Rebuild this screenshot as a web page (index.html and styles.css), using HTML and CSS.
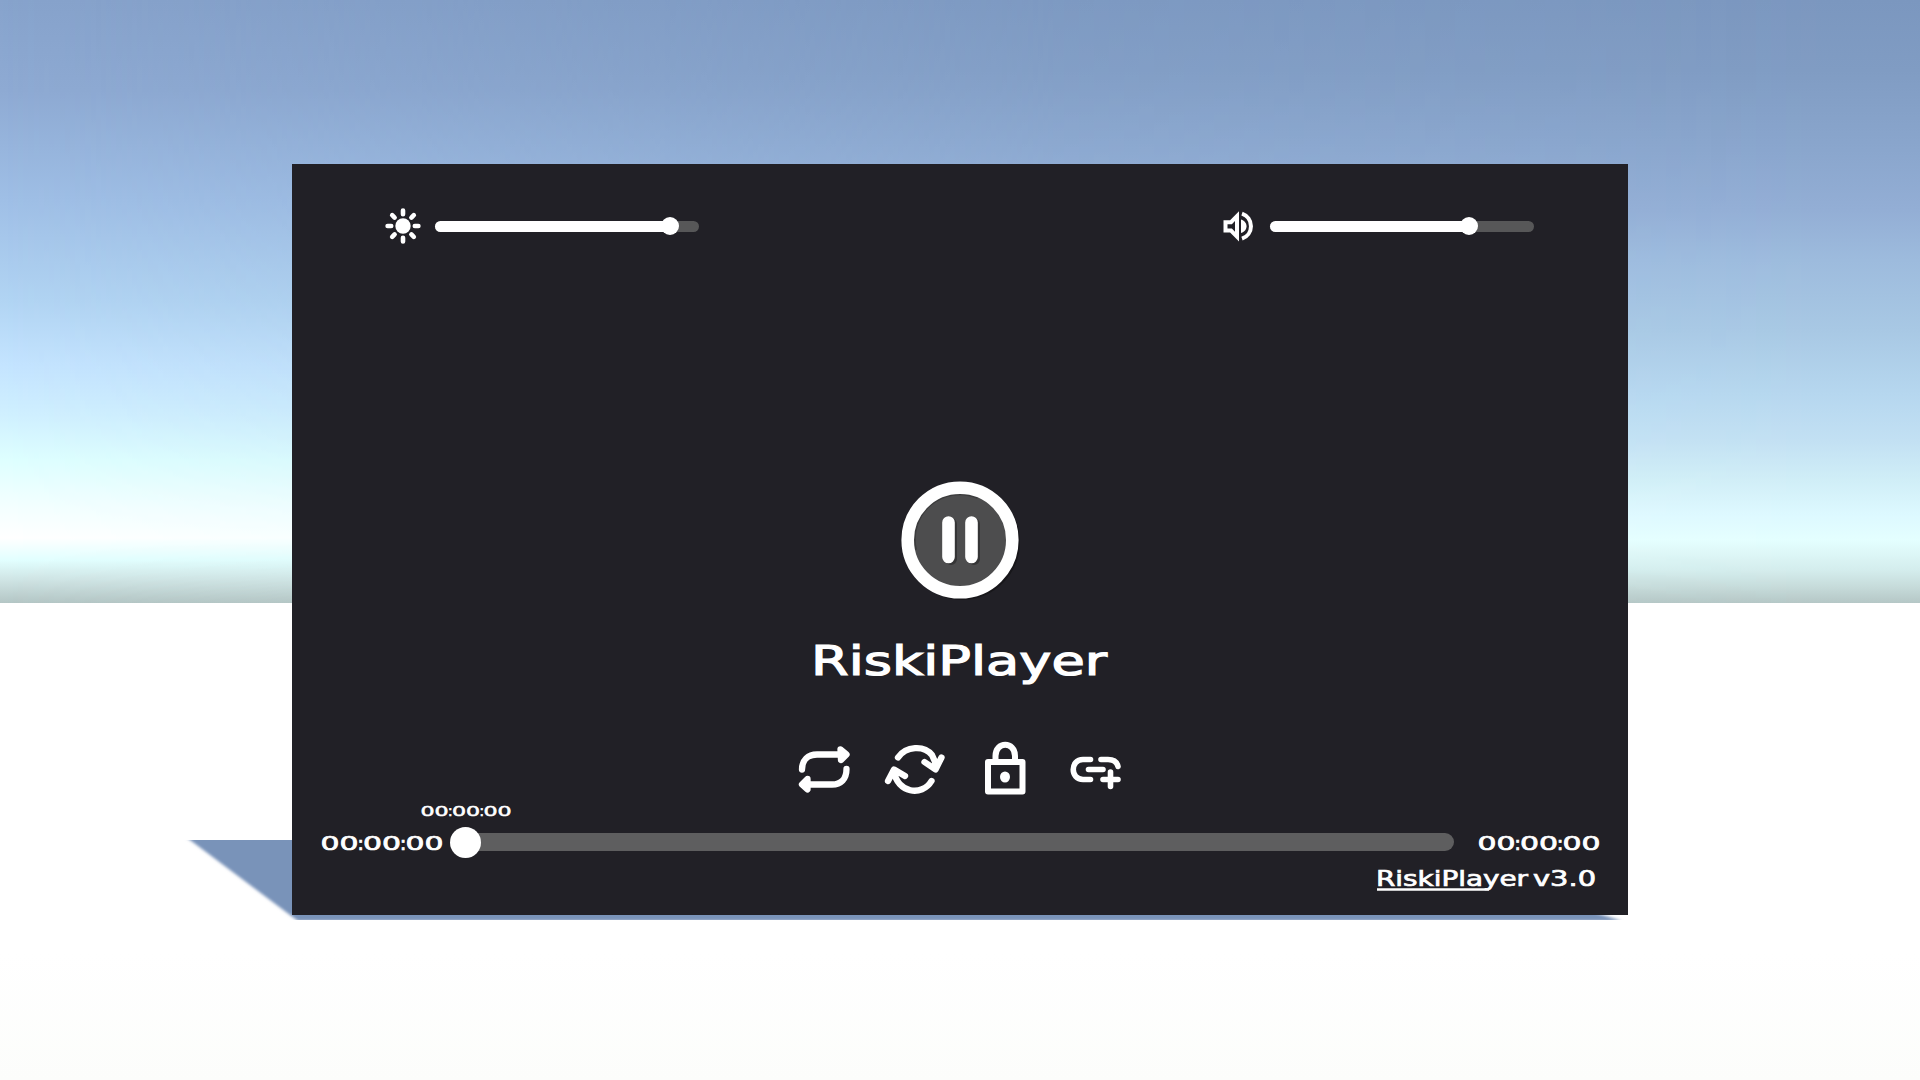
FILE: index.html
```html
<!DOCTYPE html>
<html lang="en">
<head>
<meta charset="utf-8">
<title>RiskiPlayer</title>
<link rel="stylesheet" href="styles.css">
</head>
<body>
<main class="scene">
  <div class="sky-east"></div>
  <svg class="shadow" viewBox="0 0 1480 100" aria-hidden="true">
    <defs><filter id="soft" x="-5%" y="-20%" width="110%" height="140%"><feGaussianBlur stdDeviation="1.6"/></filter>
    <clipPath id="floor"><path d="M0 10H1480V90H0z"/></clipPath></defs>
    <g clip-path="url(#floor)"><path filter="url(#soft)" d="M2 4L118 91H1442L1400 78L1380 4z"/></g>
  </svg>
  <section class="player">
    <div class="top">
      <div class="control">
        <svg class="icon-sm" viewBox="0 0 36 36"><circle cx="18" cy="18" r="7.7" fill="#fff"/><g stroke="#fff" stroke-width="4.6" stroke-linecap="round"><path d="M18 2.6v3.6M18 29.8v3.6M2.6 18h3.6M29.8 18h3.6M7.2 7.2l2.4 2.4M26.4 26.4l2.4 2.4M7.2 28.8l2.4-2.4M26.4 9.6l2.4-2.4"/></g></svg>
        <div class="slider"><div class="fill" style="width:235px"></div><div class="knob"></div></div>
      </div>
      <div class="control">
        <svg class="icon-sm" viewBox="0 0 36 36"><path d="M5.500 14.200h5.500l6-6v20.400l-6-6H5.500z" fill="none" stroke="#fff" stroke-width="4"/><path d="M21 11.500c4 1.500 5.500 4 5.500 6.800s-1.500 5.500-5.500 6.800z" fill="#fff"/><path d="M22 5.700a13.200 13.200 0 0 1 0 25" fill="none" stroke="#fff" stroke-width="4"/></svg>
        <div class="slider"><div class="fill" style="width:199px"></div><div class="knob"></div></div>
      </div>
    </div>
    <svg class="pause" viewBox="0 0 124 124"><circle cx="64" cy="64" r="58" fill="#17161a"/><circle cx="62" cy="62" r="52" fill="#4d4d4e"/><path d="M17 72A46 46 0 0 1 80 19" fill="none" stroke="#3b3b3c" stroke-width="4"/><circle cx="62" cy="62" r="52.300" fill="none" stroke="#fff" stroke-width="12.600"/><path d="M53 46v35M76 46v35" stroke="#353536" stroke-width="12" stroke-linecap="round"/><path d="M50.500 44.500v34.500M73.500 44.500v34.500" stroke="#fff" stroke-width="12.600" stroke-linecap="round"/></svg>
    <svg class="title" viewBox="0 0 300 56"><text x="1" y="37" textLength="296" lengthAdjust="spacingAndGlyphs">RiskiPlayer</text></svg>
    <svg class="actions" viewBox="0 0 360 90" fill="none" stroke="#fff" stroke-width="6.300" stroke-linecap="round" stroke-linejoin="round">
      <path d="M22 49.500C22 40 28 34.500 37 34.500H65M60.500 29.500L66.500 34.500L61 40ZM66.500 49C66.500 59 61 64.500 52 64.500H23M27.500 59L22 64.500L27.500 69.500Z"/>
      <path d="M118 37.500C126 26 144 25 152 35L156 44M144.500 42L155.500 49.500L161.500 37.500M108 61L114 49.500L125 56M114 51C117 73 142 77 151.500 61"/>
      <rect x="208" y="42" width="34.500" height="29.500" stroke-width="6"/><path d="M215.500 41V36C215.500 21 235 21 235 36V41" stroke-width="6"/><ellipse cx="225" cy="57" rx="5" ry="5.500" fill="#fff" stroke="none"/>
      <path stroke-width="5.600" d="M310.500 39.500H303C290 39.500 290 59.500 303 59.500H310.500M321 39.500H328C334 39.500 337 42 338 46.500M308.500 49.500H323M330.500 52V66.500M323 59.500H338"/>
    </svg>
    <div class="bottom">
      <svg class="tip" viewBox="0 0 124 27"><text y="21"><tspan x=".5" textLength="38" lengthAdjust="spacingAndGlyphs">00</tspan><tspan x="37.300">:</tspan><tspan x="43" textLength="38" lengthAdjust="spacingAndGlyphs">00</tspan><tspan x="79.800">:</tspan><tspan x="85.500" textLength="38" lengthAdjust="spacingAndGlyphs">00</tspan></text></svg>
      <div class="timeline">
        <svg class="time" viewBox="0 0 124 26"><text y="20.500"><tspan x=".5" textLength="38" lengthAdjust="spacingAndGlyphs">00</tspan><tspan x="37.300">:</tspan><tspan x="43" textLength="38" lengthAdjust="spacingAndGlyphs">00</tspan><tspan x="79.800">:</tspan><tspan x="85.500" textLength="38" lengthAdjust="spacingAndGlyphs">00</tspan></text></svg>
        <div class="track"><div class="handle"></div></div>
        <svg class="time" viewBox="0 0 124 26"><text y="20.500"><tspan x=".5" textLength="38" lengthAdjust="spacingAndGlyphs">00</tspan><tspan x="37.300">:</tspan><tspan x="43" textLength="38" lengthAdjust="spacingAndGlyphs">00</tspan><tspan x="79.800">:</tspan><tspan x="85.500" textLength="38" lengthAdjust="spacingAndGlyphs">00</tspan></text></svg>
      </div>
      <svg class="version" viewBox="0 0 222 30"><text x="0" y="20" textLength="152" lengthAdjust="spacingAndGlyphs">RiskiPlayer</text><text x="157" y="20" textLength="63" lengthAdjust="spacingAndGlyphs">v3.0</text><path d="M1 23.500H113" stroke="#fff" stroke-width="2.700"/></svg>
    </div>
  </section>
</main>
</body>
</html>
```
FILE: styles.css
```css
body { margin: 0; overflow: hidden; }
.scene {
  position: relative; box-sizing: border-box; width: 1920px; height: 1080px; padding: 164px 292px 165px;
  background:
    linear-gradient(#fff 0, #fff 350px, #fcfdfb 477px) 0 603px / 100% 477px no-repeat,
    linear-gradient(#87a3cc 0, #8eaad3 90px, #9fbfe6 200px, #b1d4f3 300px, #c4e4ff 365px, #d0f0ff 415px, #deffff 460px, #f3ffff 505px, #fff 538px, #e2ffff 560px, #cfe4e4 580px, #b4c6c5 603px);
}
.sky-east {
  position: absolute; inset: 0 0 auto; height: 603px;
  background: linear-gradient(#7b97bf 0, #809cc3 70px, #8aa6cd 150px, #93aed5 210px, #9dbbdd 260px, #a8c8e4 330px, #b6d7ef 395px, #c2e0f3 440px, #d0eef7 480px, #ddf9ff 515px, #e4ffff 540px, #d4eded 570px, #c6dbda 587px, #b5c7c6 603px);
  -webkit-mask-image: linear-gradient(to right, transparent, #000c 55%, #000 95%);
  mask-image: linear-gradient(to right, transparent, #000c 55%, #000 95%);
}
.shadow { position: absolute; left: 180px; top: 830px; width: 1480px; height: 100px; fill: #7993b9; }
.player { position: relative; box-sizing: border-box; width: 1336px; height: 751px; background: #212026; display: flex; flex-direction: column; align-items: center; }
.top { align-self: stretch; display: flex; justify-content: space-between; padding: 44px 94px 0 93px; height: 36px; }
.control { display: flex; align-items: center; gap: 14px; }
.icon-sm { width: 36px; height: 36px; }
.slider { width: 264px; height: 11px; border-radius: 6px; background: #575758; display: flex; align-items: center; }
.fill { height: 11px; border-radius: 6px 0 0 6px; background: #fff; }
.knob { width: 18px; height: 18px; border-radius: 50%; background: #fff; margin-left: -9px; flex: none; }
.pause { width: 124px; height: 124px; margin-top: 234px; }
.title { width: 300px; height: 56px; margin-top: 36px; }
text { font-family: "DejaVu Sans", sans-serif; font-size: 20px; fill: #fff; stroke: #fff; stroke-width: .7px; }
.title text { font-size: 40px; stroke-width: 1.200px; }
.actions { width: 360px; height: 90px; margin-top: 26px; }
.bottom { align-self: stretch; display: flex; flex-direction: column; }
.tip { width: 92px; height: 20px; margin: -10px 0 0 128px; }
.timeline { display: flex; align-items: center; margin: 6px 27px 0 28px; height: 32px; }
.time { width: 124px; height: 26px; }
.track { flex: 1; height: 18px; margin: 0 23px 0 8px; border-radius: 9px; background: #5e5e5f; display: flex; align-items: center; }
.handle { width: 31px; height: 31px; border-radius: 50%; background: #fff; margin-left: -2px; }
.version { width: 222px; height: 30px; margin: 8px 30px 0 auto; }
.version text { font-size: 21px; }
```
